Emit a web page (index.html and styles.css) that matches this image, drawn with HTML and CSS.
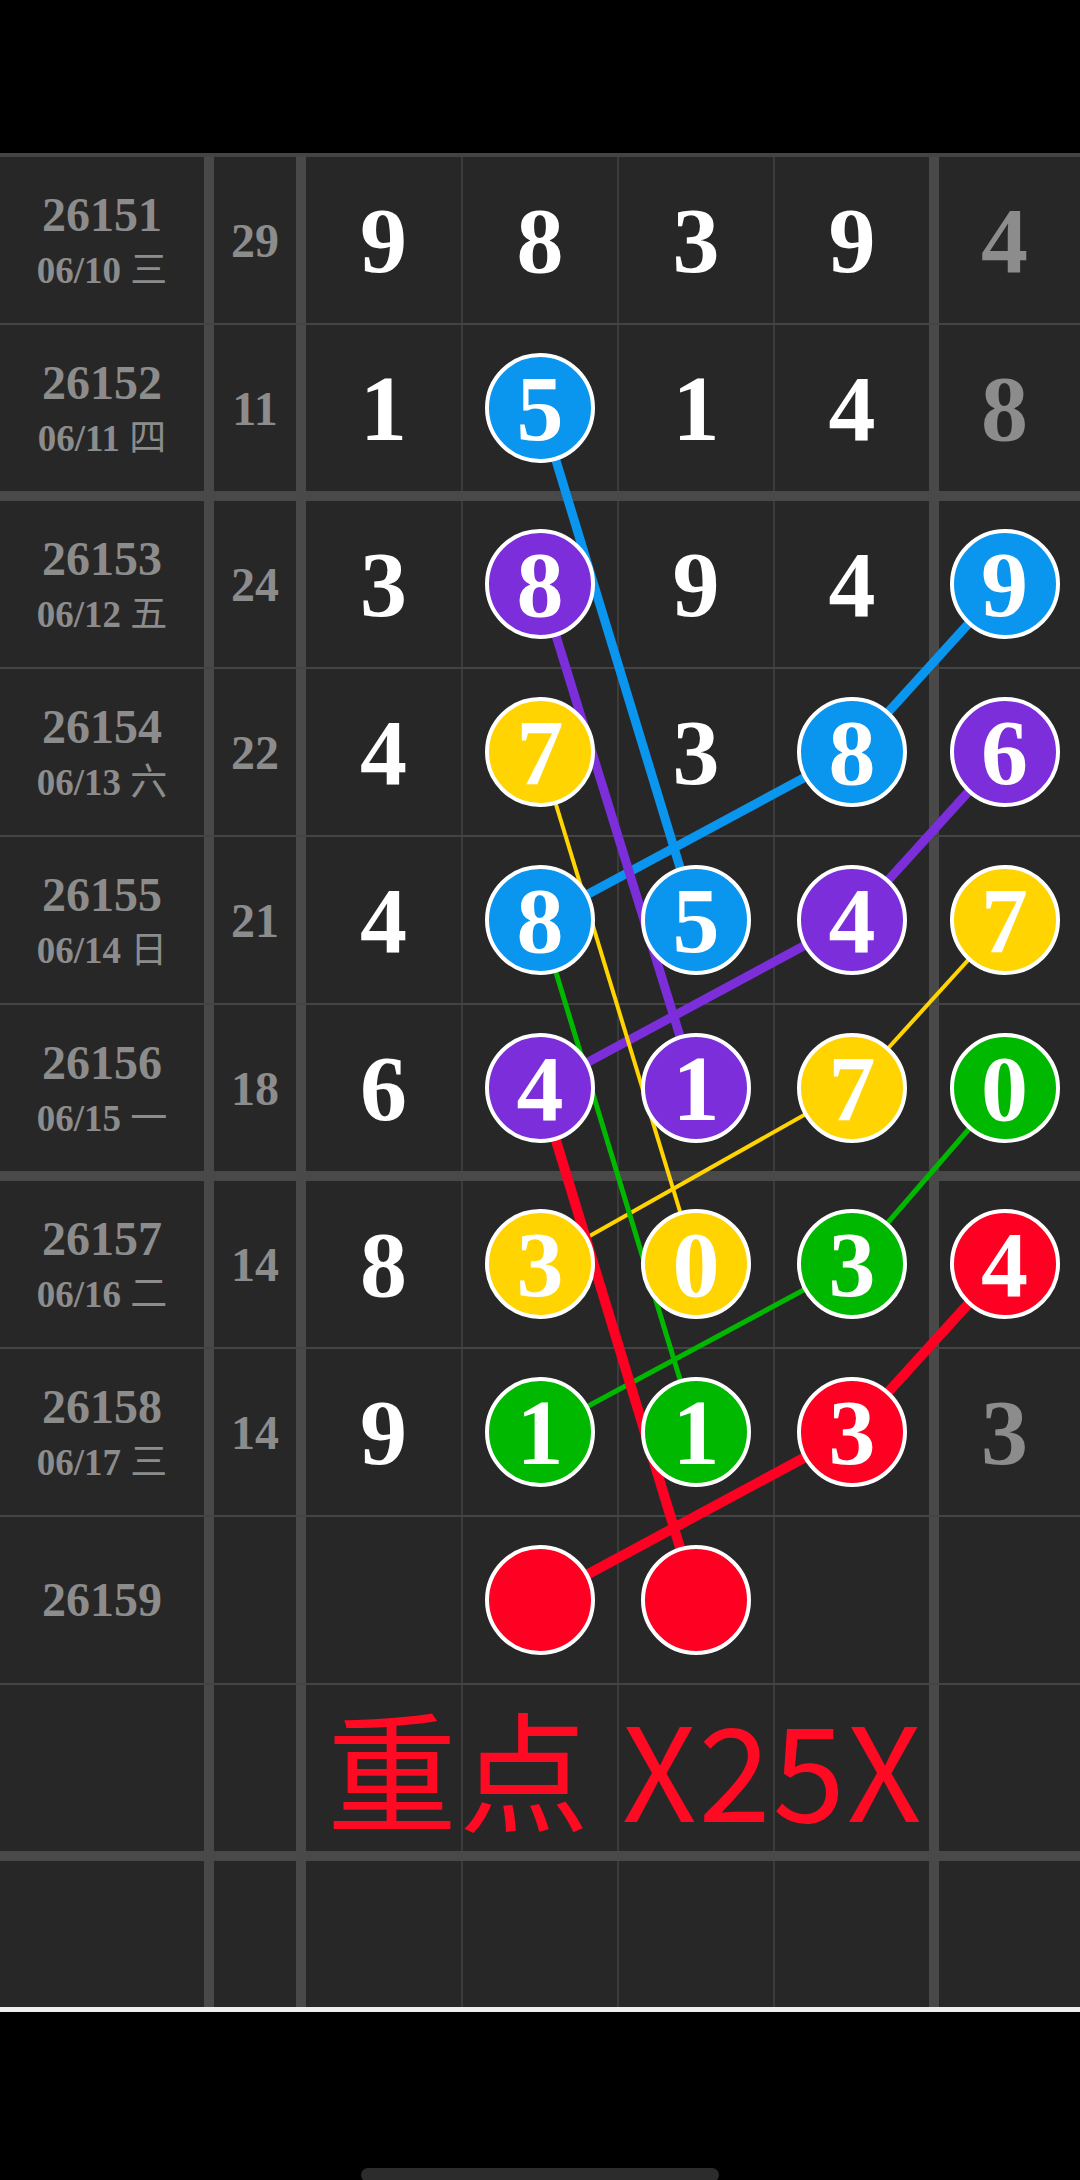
FILE: index.html
```html
<!DOCTYPE html>
<html>
<head>
    <title>走势图</title>
    <meta http-equiv="Content-Type" content="text/html;charset=utf-8"/>
    <link rel="stylesheet" href="styles.css">
</head>
<body>
<div class="status"></div>

<div class="board">
    <!-- connecting lines, drawn under the balls -->
    <svg class="links" width="1080" height="1850" viewBox="0 0 1080 1850">
        <g fill="none" stroke-linejoin="round">
            <polyline stroke="#0a96ef" stroke-width="9" points="540,251 696,763"/>
            <polyline stroke="#0a96ef" stroke-width="9" points="540,763 852,595 1004.5,427"/>
            <polyline stroke="#7b2ed9" stroke-width="9" points="540,427 696,931"/>
            <polyline stroke="#7b2ed9" stroke-width="9" points="540,931 852,763 1004.5,595"/>
            <polyline stroke="#ffd400" stroke-width="4" points="540,595 696,1107"/>
            <polyline stroke="#ffd400" stroke-width="4" points="540,1107 852,931 1004.5,763"/>
            <polyline stroke="#00b800" stroke-width="5" points="540,763 696,1275"/>
            <polyline stroke="#00b800" stroke-width="5" points="540,1275 852,1107 1004.5,931"/>
            <polyline stroke="#fe0022" stroke-width="10" points="540,931 696,1443"/>
            <polyline stroke="#fe0022" stroke-width="10" points="540,1443 852,1275 1004.5,1107"/>
        </g>
    </svg>

    <div class="row">
        <div class="cell period"><b>26151</b><span class="date">06/10 <i>三</i></span></div>
        <div class="cell sum">29</div>
        <div class="cell num">9</div>
        <div class="cell num">8</div>
        <div class="cell num">3</div>
        <div class="cell num">9</div>
        <div class="cell extra">4</div>
    </div>
    <div class="row split">
        <div class="cell period"><b>26152</b><span class="date">06/11 <i>四</i></span></div>
        <div class="cell sum">11</div>
        <div class="cell num">1</div>
        <div class="cell num"><span class="ball blue">5</span></div>
        <div class="cell num">1</div>
        <div class="cell num">4</div>
        <div class="cell extra">8</div>
    </div>
    <div class="row">
        <div class="cell period"><b>26153</b><span class="date">06/12 <i>五</i></span></div>
        <div class="cell sum">24</div>
        <div class="cell num">3</div>
        <div class="cell num"><span class="ball purple">8</span></div>
        <div class="cell num">9</div>
        <div class="cell num">4</div>
        <div class="cell extra"><span class="ball blue">9</span></div>
    </div>
    <div class="row">
        <div class="cell period"><b>26154</b><span class="date">06/13 <i>六</i></span></div>
        <div class="cell sum">22</div>
        <div class="cell num">4</div>
        <div class="cell num"><span class="ball yellow">7</span></div>
        <div class="cell num">3</div>
        <div class="cell num"><span class="ball blue">8</span></div>
        <div class="cell extra"><span class="ball purple">6</span></div>
    </div>
    <div class="row">
        <div class="cell period"><b>26155</b><span class="date">06/14 <i>日</i></span></div>
        <div class="cell sum">21</div>
        <div class="cell num">4</div>
        <div class="cell num"><span class="ball blue">8</span></div>
        <div class="cell num"><span class="ball blue">5</span></div>
        <div class="cell num"><span class="ball purple">4</span></div>
        <div class="cell extra"><span class="ball yellow">7</span></div>
    </div>
    <div class="row split">
        <div class="cell period"><b>26156</b><span class="date">06/15 <i>一</i></span></div>
        <div class="cell sum">18</div>
        <div class="cell num">6</div>
        <div class="cell num"><span class="ball purple">4</span></div>
        <div class="cell num"><span class="ball purple">1</span></div>
        <div class="cell num"><span class="ball yellow">7</span></div>
        <div class="cell extra"><span class="ball green">0</span></div>
    </div>
    <div class="row">
        <div class="cell period"><b>26157</b><span class="date">06/16 <i>二</i></span></div>
        <div class="cell sum">14</div>
        <div class="cell num">8</div>
        <div class="cell num"><span class="ball yellow">3</span></div>
        <div class="cell num"><span class="ball yellow">0</span></div>
        <div class="cell num"><span class="ball green">3</span></div>
        <div class="cell extra"><span class="ball red">4</span></div>
    </div>
    <div class="row">
        <div class="cell period"><b>26158</b><span class="date">06/17 <i>三</i></span></div>
        <div class="cell sum">14</div>
        <div class="cell num">9</div>
        <div class="cell num"><span class="ball green">1</span></div>
        <div class="cell num"><span class="ball green">1</span></div>
        <div class="cell num"><span class="ball red">3</span></div>
        <div class="cell extra">3</div>
    </div>
    <div class="row">
        <div class="cell period"><b>26159</b></div>
        <div class="cell sum"></div>
        <div class="cell num"></div>
        <div class="cell num"><span class="ball red"></span></div>
        <div class="cell num"><span class="ball red"></span></div>
        <div class="cell num"></div>
        <div class="cell extra"></div>
    </div>
    <div class="row split note">
        <div class="cell period"></div>
        <div class="cell sum"></div>
        <div class="cell num"></div>
        <div class="cell num"></div>
        <div class="cell num"></div>
        <div class="cell num"></div>
        <div class="cell extra"></div>
        <span class="note-text">重点 X25X</span>
    </div>
    <div class="row last">
        <div class="cell period"></div>
        <div class="cell sum"></div>
        <div class="cell num"></div>
        <div class="cell num"></div>
        <div class="cell num"></div>
        <div class="cell num"></div>
        <div class="cell extra"></div>
    </div>
</div>

<div class="footer">
    <span class="home-bar"></span>
</div>
</body>
</html>
```

FILE: styles.css
```css
*{box-sizing: border-box}
body {
    margin: 0px;
    padding: 0px;
    width: 1080px;
    height: 2180px;
    overflow: hidden;
    background: #000;
    font-family: "Liberation Serif", "Noto Sans CJK SC", serif;
    font-weight: bold;
}

.status{
    height: 153px;
    background: #000;
}

.board{
    position: relative;
    border-top: 4px solid #444;
    background: #272727;
}

.links{
    position: absolute;
    left: 0px;
    top: 0px;
    z-index: 1;
    pointer-events: none;
}

.row{
    display: grid;
    grid-template-columns: 214px 92px 157px 156px 156px 164px 1fr;
    height: 168px;
    border-bottom: 2px solid #444;
}
.row.split{
    height: 176px;
    border-bottom: 10px solid #494949;
}
.row.last{
    height: 146px;
    border-bottom: 0px;
}

.cell{
    display: flex;
    align-items: center;
    justify-content: center;
    background: #272727;
    color: #8c8c8c;
}
.period, .sum{
    border-right: 10px solid #494949;
}
.num{
    border-right: 2px solid #3b3b3b;
    color: #fff;
    font-size: 94px;
    line-height: 1;
}
.row .num:nth-child(6){
    border-right: 10px solid #494949;
}
.extra{
    padding-right: 10px;
    font-size: 94px;
    line-height: 1;
}

.period{
    flex-direction: column;
}
.period b{
    display: block;
    font-size: 48px;
    line-height: 1;
}
.date{
    display: block;
    margin-top: 10px;
    font-size: 37px;
    line-height: 1;
}
.date i{
    font-style: normal;
    font-weight: normal;
    font-family: "Noto Sans CJK SC", sans-serif;
}
.sum{
    font-size: 48px;
}

.ball{
    position: relative;
    z-index: 2;
    display: flex;
    align-items: center;
    justify-content: center;
    width: 110px;
    height: 110px;
    border: 4px solid #fff;
    border-radius: 50%;
    color: #fff;
    font-size: 94px;
    line-height: 1;
}
.blue{background: #0a96ef;}
.purple{background: #7b2ed9;}
.yellow{background: #ffd400;}
.green{background: #00b800;}
.red{background: #fe0022;}

.note{
    position: relative;
}
.note-text{
    position: absolute;
    left: 327px;
    top: 0px;
    bottom: 6px;
    display: flex;
    align-items: center;
    font-family: "Noto Sans CJK SC", sans-serif;
    font-weight: normal;
    font-size: 130px;
    letter-spacing: 2px;
    line-height: 1;
    color: #ff0a23;
    white-space: nowrap;
}

.footer{
    height: 168px;
    border-top: 5px solid #eee;
    background: #000;
    display: flex;
    justify-content: center;
    padding-top: 156px;
}
.home-bar{
    display: block;
    width: 358px;
    height: 14px;
    border-radius: 7px;
    background: #2c2c2c;
}
```
